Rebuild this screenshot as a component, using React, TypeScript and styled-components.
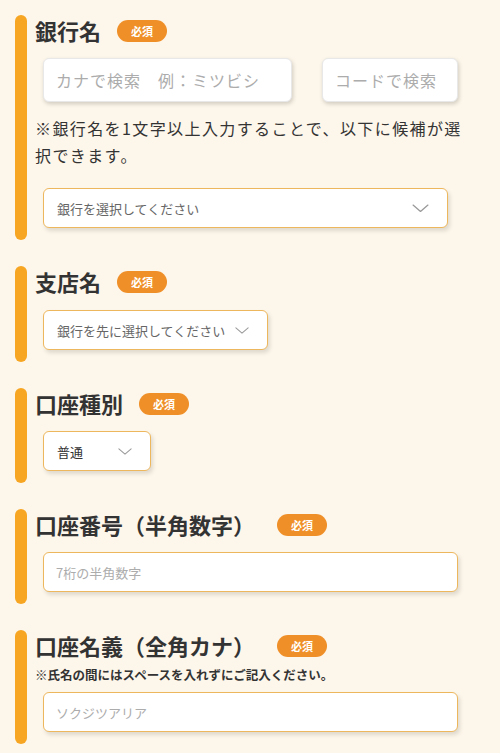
import React from 'react';
import styled, { createGlobalStyle } from 'styled-components';

const GlobalStyle = createGlobalStyle`
  html, body {
    margin: 0;
    padding: 0;
    background-color: #FDF6EA;
  }
  body {
    font-family: "Noto Sans CJK JP", "Noto Sans", sans-serif;
    color: #333;
  }
`;

const Page = styled.div`
  display: flex;
  flex-direction: column;
  gap: 26px;
  padding: 15px 34px 20px 15px;
`;

const Section = styled.section`
  display: flex;
  align-items: stretch;
`;

const Bar = styled.div`
  width: 12px;
  flex-shrink: 0;
  border-radius: 6px;
  background-color: #F6A623;
`;

const Content = styled.div`
  flex: 1;
  min-width: 0;
  padding: 0 0 12px 8px;
`;

const TitleRow = styled.div`
  display: flex;
  align-items: center;
  height: 30px;
`;

const Title = styled.h2`
  margin: 0;
  font-size: 22px;
  line-height: 30px;
  font-weight: 700;
  color: #333;
`;

const Badge = styled.span<{ $gap?: number }>`
  display: inline-flex;
  align-items: center;
  justify-content: center;
  width: 50px;
  height: 22px;
  margin: 2px 0 0 ${({ $gap }) => $gap ?? 16}px;
  border-radius: 11px;
  background-color: #EF8F27;
  color: #fff;
  font-size: 11px;
  font-weight: 700;
`;

const Field = styled.div<{ $top: number }>`
  display: flex;
  gap: 30px;
  margin: ${({ $top }) => $top}px 8px 0;
`;

const SearchInput = styled.input<{ $width: number }>`
  box-sizing: border-box;
  width: ${({ $width }) => $width}px;
  height: 44px;
  padding: 0 12px;
  border: 1px solid #e8e8e8;
  border-radius: 6px;
  background: #fff;
  box-shadow: 1px 2px 4px rgba(0, 0, 0, 0.18);
  font-family: inherit;
  font-size: 16px;
  letter-spacing: 1px;
  color: #333;
  outline: none;

  &::placeholder {
    color: #acacac;
  }
`;

const TextInput = styled.input`
  box-sizing: border-box;
  width: 100%;
  height: 40px;
  padding: 0 12px;
  border: 1.5px solid #EDB75D;
  border-radius: 6px;
  background: #fff;
  box-shadow: 2px 3px 4px rgba(0, 0, 0, 0.12);
  font-family: inherit;
  font-size: 13px;
  color: #333;
  outline: none;

  &::placeholder {
    color: #acacac;
  }
`;

const SelectBox = styled.div<{ $width?: number; $muted?: boolean }>`
  box-sizing: border-box;
  display: inline-flex;
  align-items: center;
  justify-content: space-between;
  gap: 10px;
  width: ${({ $width }) => ($width ? `${$width}px` : 'auto')};
  height: 40px;
  padding: 0 18px 0 13px;
  border: 1.5px solid #EDB75D;
  border-radius: 6px;
  background: #fff;
  box-shadow: 2px 3px 4px rgba(0, 0, 0, 0.12);
  font-size: 13px;
  color: ${({ $muted }) => ($muted ? '#666' : '#333')};
  cursor: pointer;
`;

const Note = styled.p`
  margin: 13px 0 0;
  font-size: 16px;
  line-height: 27px;
  letter-spacing: 1.4px;
  color: #333;
`;

const SmallNote = styled.p`
  margin: 6px 0 0;
  font-size: 12.5px;
  line-height: 18px;
  font-weight: 700;
  color: #333;
`;

const Chevron = ({ size = 16 }: { size?: number }) => (
  <svg width={size} height={size / 2} viewBox="0 0 16 8" fill="none">
    <polyline points="1,1 8,7 15,1" stroke="#9a9a9a" strokeWidth="1.2" strokeLinejoin="round" strokeLinecap="round" />
  </svg>
);

const Select = ({ label, width, muted, chevron }: { label: string; width?: number; muted?: boolean; chevron?: number }) => (
  <SelectBox $width={width} $muted={muted}>
    <span>{label}</span>
    <Chevron size={chevron} />
  </SelectBox>
);

const Heading = ({ children, gap }: { children: React.ReactNode; gap?: number }) => (
  <TitleRow>
    <Title>{children}</Title>
    <Badge $gap={gap}>必須</Badge>
  </TitleRow>
);

export default function App() {
  return (
    <>
      <GlobalStyle />
      <Page>
        <Section>
          <Bar />
          <Content>
            <Heading>銀行名</Heading>
            <Field $top={13}>
              <SearchInput $width={249} placeholder="カナで検索　例：ミツビシ" />
              <SearchInput $width={136} placeholder="コードで検索" />
            </Field>
            <Note>※銀行名を1文字以上入力することで、以下に候補が選択できます。</Note>
            <Field $top={19}>
              <Select label="銀行を選択してください" width={405} muted chevron={17} />
            </Field>
          </Content>
        </Section>

        <Section>
          <Bar />
          <Content>
            <Heading>支店名</Heading>
            <Field $top={14}>
              <Select label="銀行を先に選択してください" muted chevron={14} />
            </Field>
          </Content>
        </Section>

        <Section>
          <Bar />
          <Content>
            <Heading>口座種別</Heading>
            <Field $top={13}>
              <Select label="普通" width={108} chevron={14} />
            </Field>
          </Content>
        </Section>

        <Section>
          <Bar />
          <Content>
            <Heading gap={22}>口座番号（半角数字）</Heading>
            <Field $top={13}>
              <TextInput placeholder="7桁の半角数字" />
            </Field>
          </Content>
        </Section>

        <Section>
          <Bar />
          <Content>
            <Heading gap={22}>口座名義（全角カナ）</Heading>
            <SmallNote>※氏名の間にはスペースを入れずにご記入ください。</SmallNote>
            <Field $top={8}>
              <TextInput placeholder="ソクジツアリア" />
            </Field>
          </Content>
        </Section>
      </Page>
    </>
  );
}
